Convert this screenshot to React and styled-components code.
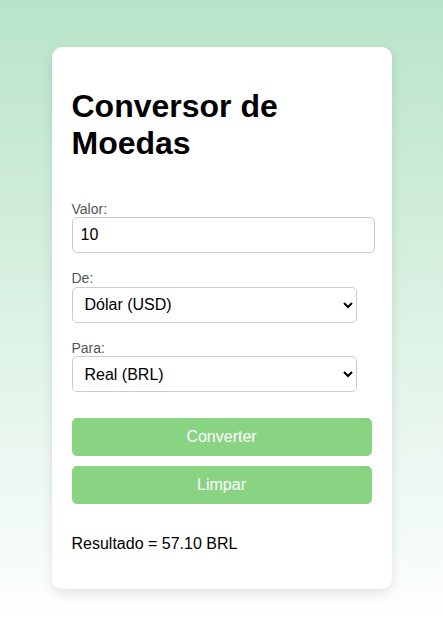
import { useState } from 'react';
import styled, { createGlobalStyle } from "styled-components";

const COLORS = {
  bgTop: "#b8e4c9",
  bgBottom: "#ffffff",
  button: "#88d483",
  label: "#555555",
  border: "#cccccc",
};

const GlobalStyle = createGlobalStyle`
  html, body {
    margin: 0;
    padding: 0;
  }
  body {
    font-family: "Liberation Sans", Arial, sans-serif;
    font-size: 16px;
  }
`;

const Page = styled.div`
  min-height: 100vh;
  box-sizing: border-box;
  padding-top: 47px;
  display: flex;
  justify-content: center;
  align-items: flex-start;
  background: linear-gradient(to bottom, ${COLORS.bgTop}, ${COLORS.bgBottom});
`;

const Card = styled.div`
  width: 300px;
  padding: 20px;
  background: #fff;
  border-radius: 10px;
  box-shadow: 0 4px 12px rgba(0, 0, 0, 0.1);
`;

const Title = styled.h1`
  font-size: 32px;
  font-weight: bold;
  margin: 21.44px 0;
  color: #000;
`;

const Form = styled.form`
  display: flex;
  flex-direction: column;
  padding-top: 15px;
`;

const Field = styled.div`
  margin-bottom: 15px;
`;

const Label = styled.label`
  display: block;
  font-size: 14px;
  line-height: 18.4px;
  padding-top: 1px;
  height: 17.4px;
  color: ${COLORS.label};
`;

const TextInput = styled.input`
  display: block;
  width: 95%;
  padding: 8px;
  font-family: inherit;
  font-size: 16px;
  border: 1px solid ${COLORS.border};
  border-radius: 5px;
  color: #000;
`;

const Select = styled.select`
  display: block;
  width: 95%;
  box-sizing: border-box;
  height: 36px;
  padding: 0 8px;
  font-family: inherit;
  font-size: 16px;
  border: 1px solid ${COLORS.border};
  border-radius: 5px;
  background: #fff;
  color: #000;
`;

const Button = styled.button`
  display: block;
  width: 100%;
  margin-top: ${(props) => (props.$first ? "11px" : "10px")};
  padding: 10px;
  font-family: inherit;
  font-size: 16px;
  line-height: 18px;
  color: #fff;
  background-color: ${COLORS.button};
  border: none;
  border-radius: 5px;
  cursor: pointer;
`;

const Result = styled.p`
  margin: 31px 0 16px;
  font-size: 16px;
  color: #000;
`;

function App() {
  const [valor, setValor] = useState("10");
  const [de, setDe] = useState("USD");
  const [para, setPara] = useState("BRL");

  return (
    <>
      <GlobalStyle />
      <Page>
        <Card>
          <Title>Conversor de Moedas</Title>
          <Form onSubmit={(e) => e.preventDefault()}>
            <Field>
              <Label htmlFor="valor">Valor:</Label>
              <TextInput
                id="valor"
                type="number"
                value={valor}
                onChange={(e) => setValor(e.target.value)}
              />
            </Field>
            <Field>
              <Label htmlFor="de">De:</Label>
              <Select id="de" value={de} onChange={(e) => setDe(e.target.value)}>
                <option value="USD">Dólar (USD)</option>
                <option value="BRL">Real (BRL)</option>
                <option value="EUR">Euro (EUR)</option>
              </Select>
            </Field>
            <Field>
              <Label htmlFor="para">Para:</Label>
              <Select id="para" value={para} onChange={(e) => setPara(e.target.value)}>
                <option value="BRL">Real (BRL)</option>
                <option value="USD">Dólar (USD)</option>
                <option value="EUR">Euro (EUR)</option>
              </Select>
            </Field>
            <Button $first type="submit">Converter</Button>
            <Button type="button" onClick={() => setValor("")}>Limpar</Button>
          </Form>
          <Result>Resultado = 57.10 BRL</Result>
        </Card>
      </Page>
    </>
  );
}

export default App;
